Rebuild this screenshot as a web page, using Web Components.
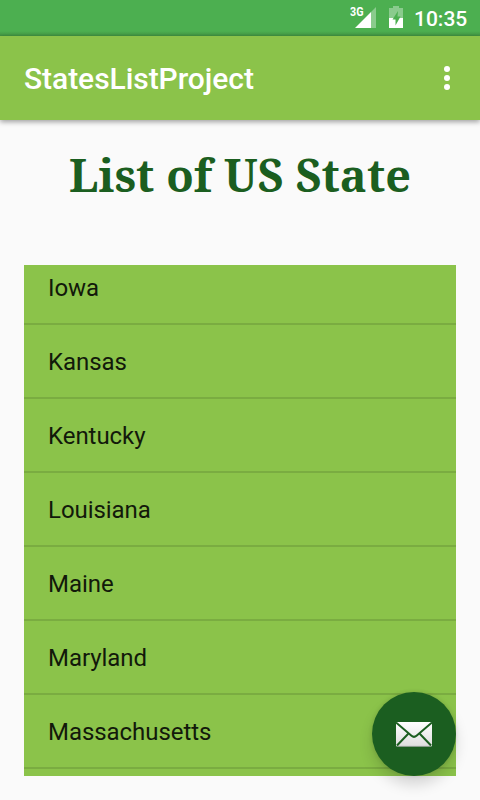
<!DOCTYPE html>
<html lang="en">
<head>
<meta charset="utf-8">
<title>StatesListProject</title>
<style>
html, body { margin: 0; height: 100%; }
body { background: #fafafa; font-family: Roboto, "Liberation Sans", sans-serif; overflow: hidden; }
</style>
</head>
<body>
<states-app></states-app>
<script>
const define = (name, html, setup) => customElements.define(name, class extends HTMLElement {
  constructor() {
    super();
    this.attachShadow({ mode: 'open' }).innerHTML = html;
    if (setup) setup(this.shadowRoot);
  }
});

define('status-bar', `
<style>
:host { display: flex; box-sizing: border-box; height: 36px; padding-right: 12px; justify-content: flex-end;
  background: linear-gradient(#4caf50 0 31px, #49a54b 33px, #3f9141 36px); color: #fff; }
svg { flex: none; }
time { font: 500 21px/38px Roboto, sans-serif; width: 54px; white-space: nowrap; }
.net { font: 700 12px Roboto, sans-serif; }
</style>
<svg width="64" height="36" viewBox="0 0 64 36" fill="#fff">
  <path opacity=".35" d="M26 7V28H21V12z"/>
  <path d="M21 12V28H5z"/>
  <text class="net" x="0" y="16" textLength="13.5" lengthAdjust="spacingAndGlyphs">3G</text>
  <path opacity=".35" d="M39 8H43V6H49V8H53V18H39z"/>
  <path d="M39 18H53V28H39z"/>
  <path fill="#4caf50" d="M48 11L42.5 19.5H45.5V25.5L50.5 16.5H47.5z"/>
</svg>
<time>10:35</time>`);

define('overflow-button', `
<style>
:host { display: flex; flex-direction: column; gap: 3px; }
i { width: 6px; height: 6px; border-radius: 50%; background: #fff; }
</style><i></i><i></i><i></i>`);

define('app-bar', `
<style>
:host { display: flex; align-items: center; justify-content: space-between; box-sizing: border-box; height: 84px;
  padding: 0 30px 0 24px; background: #8bc34a; color: #fff; box-shadow: 0 2px 5px rgba(0,0,0,.36); }
h1 { margin: 2px 0 0; font: 500 30px/36px Roboto, sans-serif; letter-spacing: -.05px; }
</style>
<h1><slot></slot></h1><overflow-button></overflow-button>`);

define('page-title', `
<style>
:host { display: flex; justify-content: center; height: 145px; box-sizing: border-box; padding-top: 20px; }
h2 { margin: 0; font: 700 45px/70px "Noto Serif", "DejaVu Serif Condensed", "DejaVu Serif", serif; letter-spacing: .05px; color: #1b5e20; white-space: nowrap; }
</style>
<h2><slot></slot></h2>`);

define('state-row', `
<style>
:host { display: block; flex: none; height: 72px; padding-left: 24px; border-bottom: 2px solid #7aac41;
  font: 400 24px/75px Roboto, sans-serif; letter-spacing: -.05px; color: #12190a; }
</style><slot></slot>`);

define('state-list', `
<style>
:host { display: flex; flex-direction: column; height: 511px; margin: 0 24px; overflow: hidden; background: #8bc34a; }
::slotted(:first-child) { margin-top: -14px; }
</style><slot></slot>`);

define('mail-fab', `
<style>
:host { position: absolute; right: 24px; bottom: 24px; width: 84px; height: 84px; border-radius: 50%;
  background: #1b5e20; box-shadow: 0 9px 14px rgba(0,0,0,.15), 0 0 4px rgba(0,0,0,.12);
  display: flex; align-items: center; justify-content: center; }
</style>
<svg width="36" height="26" viewBox="0 0 36 26">
  <defs><linearGradient id="g" x2="0" y2="1"><stop stop-color="#fff"/><stop offset="1" stop-color="#dedede"/></linearGradient></defs>
  <rect y="1" width="36" height="24.6" rx="1" fill="url(#g)"/>
  <path d="M1 25.4H35" stroke="#8f9a90" stroke-width=".8"/>
  <path d="M0 1.5L15.5 14.8Q18 17 20.5 14.8L36 1.5M1 24.5L12 13M35 24.5L24 13" fill="none" stroke="#1b5e20" stroke-width="2"/>
</svg>`);

define('states-app', `
<style>
:host { display: flex; flex-direction: column; position: relative; width: 480px; height: 800px; background: #fafafa; overflow: hidden; }
</style>
<status-bar></status-bar>
<app-bar>StatesListProject</app-bar>
<page-title>List of US State</page-title>
<state-list></state-list>
<mail-fab></mail-fab>`, root => {
  const list = root.querySelector('state-list');
  for (const name of ['Iowa', 'Kansas', 'Kentucky', 'Louisiana', 'Maine', 'Maryland', 'Massachusetts']) {
    const row = document.createElement('state-row');
    row.textContent = name;
    list.append(row);
  }
});
</script>
</body>
</html>
